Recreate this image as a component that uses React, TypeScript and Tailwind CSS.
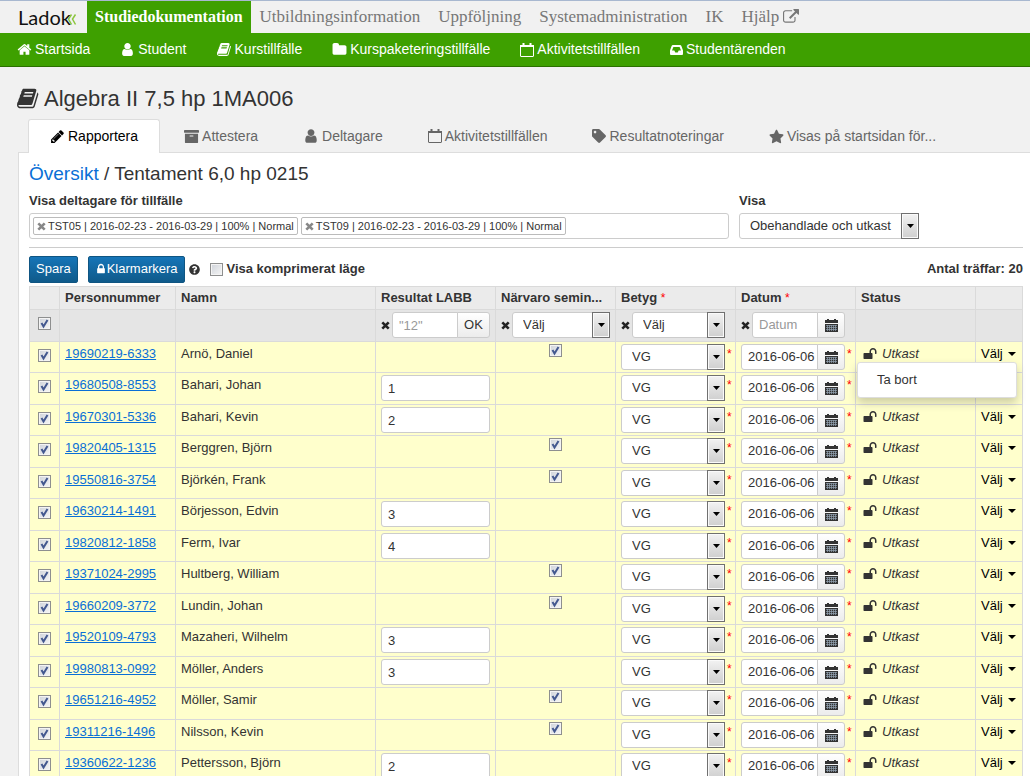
import type { ReactNode } from "react";
import { FaArchive, FaQuestionCircle, FaStar, FaTag } from "react-icons/fa";

const paths = {
  home: "M1472 992v480q0 26-19 45t-45 19h-384v-384h-256v384h-384q-26 0-45-19t-19-45v-480q0-1 .5-3t.5-3l575-474 575 474q1 2 1 6zm223-69l-62 74q-8 9-21 11h-3q-13 0-21-7l-692-577-692 577q-12 8-24 7-13-2-21-11l-62-74q-8-10-7-23.5t11-21.5l719-599q32-26 76-26t76 26l244 204v-195q0-14 9-23t23-9h192q14 0 23 9t9 23v408l219 182q10 8 11 21.5t-7 23.5z",
  user: "M1536 1399q0 109-62.5 187t-150.5 78h-854q-88 0-150.5-78t-62.5-187q0-85 8.5-160.5t31.5-152 58.5-131 94-89 134.5-34.5q131 128 313 128t313-128q76 0 134.5 34.5t94 89 58.5 131 31.5 152 8.5 160.5zm-256-887q0 159-112.5 271.5t-271.5 112.5-271.5-112.5-112.5-271.5 112.5-271.5 271.5-112.5 271.5 112.5 112.5 271.5z",
  book: "M1639 478q40 57 18 129l-275 906q-19 64-76.5 107.5t-122.5 43.5h-923q-77 0-148.5-53.5t-99.5-131.5q-24-67-2-127 0-4 3-27t4-37q1-8-3-21.5t-3-19.5q2-11 8-21t16.5-23.5 16.5-23.5q23-38 45-91.5t30-91.5q3-10 .5-30t-.5-28q3-11 17-28t17-23q21-36 42-92t25-90q1-9-2.5-32t.5-28q4-13 22-30.5t22-22.5q19-26 42.5-84.5t27.5-96.5q1-8-3-25.5t-2-26.5q2-8 9-18t18-23 17-21q8-12 16.5-30.5t15-35 16-36 19.5-32 26.5-23.5 36-11.5 47.5 5.5l-1 3q38-9 51-9h761q74 0 114 56t18 130l-274 906q-36 119-71.5 153.5t-128.5 34.5h-869q-27 0-38 15-11 16-1 43 24 70 144 70h923q29 0 56-15.5t35-41.5l300-987q7-22 5-57 38 15 59 43zm-1064 2q-4 13 2 22.5t20 9.5h608q13 0 25.5-9.5t16.5-22.5l21-64q4-13-2-22.5t-20-9.5h-608q-13 0-25.5 9.5t-16.5 22.5zm-83 256q-4 13 2 22.5t20 9.5h608q13 0 25.5-9.5t16.5-22.5l21-64q4-13-2-22.5t-20-9.5h-608q-13 0-25.5 9.5t-16.5 22.5z",
  folder: "M1728 608v704q0 92-66 158t-158 66h-1216q-92 0-158-66t-66-158v-960q0-92 66-158t158-66h320q92 0 158 66t66 158v32h672q92 0 158 66t66 158z",
  pencil: "M491 1536l91-91-235-235-91 91v107h128v128h107zm523-928q0-22-22-22-10 0-17 7l-542 542q-7 7-7 17 0 22 22 22 10 0 17-7l542-542q7-7 7-17zm-54-192l416 416-832 832h-416v-416zm683 96q0 53-37 90l-166 166-416-416 166-165q36-38 90-38 53 0 91 38l235 234q37 39 37 91z",
  external: "M1408 928v320q0 119-84.5 203.5t-203.5 84.5h-832q-119 0-203.5-84.5t-84.5-203.5v-832q0-119 84.5-203.5t203.5-84.5h704q14 0 23 9t9 23v64q0 14-9 23t-23 9h-704q-66 0-113 47t-47 113v832q0 66 47 113t113 47h832q66 0 113-47t47-113v-320q0-14 9-23t23-9h64q14 0 23 9t9 23zm384-864v512q0 26-19 45t-45 19-45-19l-176-176-652 652q-10 10-23 10t-23-10l-114-114q-10-10-10-23t10-23l652-652-176-176q-19-19-19-45t19-45 45-19h512q26 0 45 19t19 45z",
  lock: "M640 768h512v-192q0-106-75-181t-181-75-181 75-75 181v192zm832 96v576q0 40-28 68t-68 28h-960q-40 0-68-28t-28-68v-576q0-40 28-68t68-28h32v-192q0-184 132-316t316-132 316 132 132 316v192h32q40 0 68 28t28 68z",
  unlock: "M1728 576v256q0 26-19 45t-45 19h-64q-26 0-45-19t-19-45v-256q0-106-75-181t-181-75-181 75-75 181v192h96q40 0 68 28t28 68v576q0 40-28 68t-68 28h-960q-40 0-68-28t-28-68v-576q0-40 28-68t68-28h672v-192q0-185 131.5-316.5t316.5-131.5 316.5 131.5 131.5 316.5z",
};

function Icon({ name, className = "size-4" }: { name: keyof typeof paths; className?: string }) {
  return (
    <svg viewBox="0 0 1792 1792" fill="currentColor" className={`shrink-0 ${className}`} aria-hidden="true">
      <path d={paths[name]} />
    </svg>
  );
}

function CalendarOutline() {
  return (
    <svg viewBox="0 0 14 14" fill="none" stroke="currentColor" className="size-3.5 shrink-0" aria-hidden="true">
      <rect x="0.5" y="2.5" width="13" height="11" rx="0.5" />
      <path d="M0 2h14v2H0z" fill="currentColor" stroke="none" />
      <path d="M3.500 0v4M10.500 0v4" strokeWidth="2" />
    </svg>
  );
}

function CalendarGrid() {
  return (
    <svg viewBox="0 0 13 13" className="size-[13px]" fill="#333" aria-hidden="true">
      <path d="M2 0h2v1h5V0h2v1h2v3H0V1h2z" />
      <path d="M0 5h13v8H0z" />
      <path d="M1 6.500h11M1 8.500h11M1 10.500h11M2.500 6v6M4.500 6v6M6.500 6v6M8.500 6v6M10.500 6v6" stroke="#93a3b3" strokeWidth="0.7" />
    </svg>
  );
}

function Inbox() {
  return (
    <svg viewBox="0 0 13 12" className="h-3 w-[13px] shrink-0" fill="currentColor" fillRule="evenodd" aria-hidden="true">
      <path d="M3 1h7q1 0 1.400 1L13 6.500V10q0 1-1 1H1q-1 0-1-1V6.500L1.600 2Q2 1 3 1zM3.400 3L2 6.500h2.300L5.300 8.500h2.400l1-2H11L9.600 3z" />
    </svg>
  );
}

function Cross({ className = "" }: { className?: string }) {
  return (
    <svg viewBox="0 0 9 9" className={`size-[9px] shrink-0 ${className}`} aria-hidden="true">
      <path d="M1.300 1.300l6.400 6.400M7.700 1.300L1.300 7.700" stroke="currentColor" strokeWidth="2.600" />
    </svg>
  );
}

function Checkbox({ id, label, checked = true }: { id?: string; label?: string; checked?: boolean }) {
  return (
    <span className="inline-grid size-[13px] align-top">
      <input
        id={id}
        type="checkbox"
        aria-label={label}
        defaultChecked={checked}
        className="peer col-start-1 row-start-1 size-[13px] appearance-none border border-[#8e8f8f] bg-linear-to-br from-[#cfd3da] to-[#f6f6f6] shadow-[inset_0_0_0_1px_#f4f4f4]"
      />
      <svg
        viewBox="0 0 13 13"
        className="pointer-events-none invisible col-start-1 row-start-1 size-[13px] peer-checked:visible"
        fill="none"
        stroke="#43588f"
        strokeWidth="2"
        aria-hidden="true"
      >
        <path d="M3.500 6l2 3.500L9.500 3" />
      </svg>
    </span>
  );
}

function Select({ id, label, value, className = "" }: { id?: string; label?: string; value: string; className?: string }) {
  return (
    <span className={`relative flex h-[26px] ${className}`}>
      <select
        id={id}
        aria-label={label}
        className="w-full appearance-none rounded-[3px] border border-[#ccc] bg-white pl-2.5 text-[13px] text-[#333]"
      >
        <option>{value}</option>
      </select>
      <span className="pointer-events-none absolute inset-y-0 right-0 grid w-[18px] place-items-center border border-[#707070] bg-linear-to-b from-[#f2f2f2] to-[#cfcfcf] shadow-[inset_0_0_0_1px_#fafafa]">
        <svg viewBox="0 0 7 4" className="h-1 w-[7px]" aria-hidden="true">
          <path d="M0 0h7L3.500 4z" />
        </svg>
      </span>
    </span>
  );
}

function DateField({ label, value, className }: { label: string; value?: string; className: string }) {
  return (
    <span className={`flex h-[26px] ${className}`}>
      <input
        aria-label={label}
        defaultValue={value}
        placeholder="Datum"
        className="w-full min-w-0 rounded-l-[3px] border border-[#ccc] bg-white pl-1.5 text-[13px] placeholder:text-[#999]"
      />
      <button
        type="button"
        aria-label="Välj datum"
        className="-ml-px grid w-7 shrink-0 place-items-center rounded-r-[3px] border border-[#ccc] bg-linear-to-b from-white to-[#ececec]"
      >
        <CalendarGrid />
      </button>
    </span>
  );
}

function Required() {
  return <span className="text-[12px] font-normal text-[#f00]">*</span>;
}

function Clear({ label }: { label: string }) {
  return (
    <button type="button" aria-label={label} className="mr-[2px] text-[#222]">
      <Cross />
    </button>
  );
}

const menu = ["Utbildningsinformation", "Uppföljning", "Systemadministration", "IK"];

const subMenu: [string, ReactNode][] = [
  ["Startsida", <Icon name="home" className="size-[15px]" />],
  ["Student", <Icon name="user" className="size-[15px]" />],
  ["Kurstillfälle", <Icon name="book" className="size-[15px]" />],
  ["Kurspaketeringstillfälle", <Icon name="folder" className="size-[15px]" />],
  ["Aktivitetstillfällen", <CalendarOutline />],
  ["Studentärenden", <Inbox />],
];

const tabs: [string, ReactNode][] = [
  ["Attestera", <FaArchive className="size-[15px]" />],
  ["Deltagare", <Icon name="user" />],
  ["Aktivitetstillfällen", <CalendarOutline />],
  ["Resultatnoteringar", <FaTag className="size-3.5" />],
  ["Visas på startsidan för...", <FaStar className="size-[15px]" />],
];

const chips = ["TST05 | 2016-02-23 - 2016-03-29 | 100% | Normal", "TST09 | 2016-02-23 - 2016-03-29 | 100% | Normal"];

// A row has either a lab result or an attended seminar
const rows: { id: string; name: string; result?: string }[] = [
  { id: "19690219-6333", name: "Arnö, Daniel" },
  { id: "19680508-8553", name: "Bahari, Johan", result: "1" },
  { id: "19670301-5336", name: "Bahari, Kevin", result: "2" },
  { id: "19820405-1315", name: "Berggren, Björn" },
  { id: "19550816-3754", name: "Björkén, Frank" },
  { id: "19630214-1491", name: "Börjesson, Edvin", result: "3" },
  { id: "19820812-1858", name: "Ferm, Ivar", result: "4" },
  { id: "19371024-2995", name: "Hultberg, William" },
  { id: "19660209-3772", name: "Lundin, Johan" },
  { id: "19520109-4793", name: "Mazaheri, Wilhelm", result: "3" },
  { id: "19980813-0992", name: "Möller, Anders", result: "3" },
  { id: "19651216-4952", name: "Möller, Samir" },
  { id: "19311216-1496", name: "Nilsson, Kevin" },
  { id: "19360622-1236", name: "Pettersson, Björn", result: "2" },
];

function Header() {
  return (
    <header className="shrink-0">
      <nav className="flex h-[33px] border-t border-[#a8b8d0] font-['Liberation_Serif',serif] text-[17px] text-[#777]">
        <a href="#" aria-label="Ladok" className="flex w-[87px] items-center pl-[18px]">
          <svg viewBox="0 0 60 24" className="h-6 w-[60px]" aria-hidden="true">
            <text x="0" y="20" fontFamily="Lato" fontSize="20" fill="#111">
              Ladok
            </text>
            <path d="M53.500 9.500l-3 4.500 3 5.500M57.500 9.500l-3 4.500 3 5.500" fill="none" stroke="#8cc63f" strokeWidth="1.500" />
          </svg>
        </a>
        <a href="#" className="flex items-center bg-[#3ea000] px-2 text-[16px] font-bold text-white">
          Studiedokumentation
        </a>
        {menu.map((item) => (
          <a key={item} href="#" className="flex items-center px-[9px]">
            {item}
          </a>
        ))}
        <a href="#" className="flex items-center gap-1 px-[9px]">
          Hjälp
          <Icon name="external" className="size-4" />
        </a>
      </nav>
      <nav className="flex h-[34px] items-center gap-[30px] border-b border-[#2b7000] bg-[#3ea000] pl-[17px] text-[14px] text-white">
        {subMenu.map(([text, icon]) => (
          <a key={text} href="#" className="flex items-center gap-[3px]">
            {icon}
            {text}
          </a>
        ))}
      </nav>
    </header>
  );
}

function Filters() {
  return (
    <div className="flex gap-2.5 border-b border-[#ccc] pb-2">
      <div className="min-w-0 grow">
        <label htmlFor="occasions" className="block text-[13px] leading-6 font-bold">
          Visa deltagare för tillfälle
        </label>
        <div className="flex h-[26px] items-center gap-[3px] rounded-[3px] border border-[#ccc] px-[3px]">
          {chips.map((chip) => (
            <span key={chip} className="flex h-[18px] shrink-0 items-center gap-[2px] rounded-[2px] border border-[#bbb] px-[3px] text-[11px]">
              <button type="button" aria-label={`Ta bort ${chip.slice(0, 5)}`}>
                <Cross className="text-[#888]" />
              </button>
              {chip}
            </span>
          ))}
          <input id="occasions" className="w-0 min-w-0 grow outline-none" />
        </div>
      </div>
      <div className="w-[284px] shrink-0">
        <label htmlFor="show" className="block text-[13px] leading-6 font-bold">
          Visa
        </label>
        <Select id="show" value="Obehandlade och utkast" className="w-[180px]" />
      </div>
    </div>
  );
}

function Toolbar() {
  const button =
    "flex h-[27px] items-center rounded-[2px] border border-[#0f5582] bg-linear-to-b from-[#1675b8] to-[#0f5a8a] px-1.5 text-[13px] text-white";
  return (
    <div className="flex h-[38px] items-center pt-1">
      <button type="button" className={button}>
        Spara
      </button>
      <button type="button" className={`ml-2.5 ${button}`}>
        <Icon name="lock" className="size-3" />
        Klarmarkera
      </button>
      <FaQuestionCircle className="mx-1 size-[11px]" />
      <label htmlFor="compact" className="ml-1.5 flex items-center gap-1 text-[13px] font-bold">
        <Checkbox id="compact" checked={false} />
        Visa komprimerat läge
      </label>
      <p className="ml-auto text-[13px] font-bold">Antal träffar: 20</p>
    </div>
  );
}

function ResultTable() {
  return (
    <table className="w-full table-fixed border-collapse text-[13px] leading-5 [&_td]:border [&_td]:border-[#dadada] [&_td]:px-[5px] [&_td]:py-[2px] [&_td]:align-top [&_th]:border [&_th]:border-[#dadada] [&_th]:px-[5px] [&_th]:text-left">
      <colgroup>
        <col className="w-[30px]" />
        <col className="w-[116px]" />
        <col />
        <col className="w-[120px]" />
        <col className="w-[120px]" />
        <col className="w-[120px]" />
        <col className="w-[120px]" />
        <col className="w-[120px]" />
        <col className="w-[47px]" />
      </colgroup>
      <thead>
        <tr className="h-[23px] bg-[#ebebeb]">
          <th />
          <th>Personnummer</th>
          <th>Namn</th>
          <th>Resultat LABB</th>
          <th>Närvaro semin...</th>
          <th>
            Betyg <Required />
          </th>
          <th>
            Datum <Required />
          </th>
          <th>Status</th>
          <th />
        </tr>
        <tr className="h-8 bg-[#e5e5e5]">
          <td className="text-center">
            <div className="pt-[5px]">
              <Checkbox label="Markera alla" />
            </div>
          </td>
          <td />
          <td />
          <td>
            <div className="flex h-[26px] items-center">
              <Clear label="Rensa resultat" />
              <input
                aria-label="Resultat"
                placeholder={'"12"'}
                className="h-[26px] w-full min-w-0 rounded-l-[3px] border border-[#ccc] bg-white pl-1.5 placeholder:text-[#999]"
              />
              <button
                type="button"
                className="-ml-px h-[26px] w-[33px] shrink-0 rounded-r-[3px] border border-[#ccc] bg-linear-to-b from-white to-[#ececec]"
              >
                OK
              </button>
            </div>
          </td>
          <td>
            <div className="flex items-center">
              <Clear label="Rensa närvaro" />
              <Select label="Närvaro" value="Välj" className="grow" />
            </div>
          </td>
          <td>
            <div className="flex items-center pr-[5px]">
              <Clear label="Rensa betyg" />
              <Select label="Betyg" value="Välj" className="grow" />
            </div>
          </td>
          <td>
            <div className="flex items-center pr-[5px]">
              <Clear label="Rensa datum" />
              <DateField label="Datum" className="grow" />
            </div>
          </td>
          <td />
          <td />
        </tr>
      </thead>
      <tbody className="bg-[#ffffcc]">
        {rows.map((row, i) => (
          <tr key={row.id} className="h-[31px] even:h-8">
            <td className="text-center">
              <div className="pt-[5px]">
                <Checkbox label={`Markera ${row.name}`} />
              </div>
            </td>
            <td>
              <a href="#" className="text-[#0a6fd6] underline">
                {row.id}
              </a>
            </td>
            <td>{row.name}</td>
            <td>
              {row.result && (
                <input
                  aria-label={`Resultat för ${row.name}`}
                  defaultValue={row.result}
                  className="block h-[26px] w-full rounded-[3px] border border-[#ccc] bg-white px-1.5"
                />
              )}
            </td>
            <td className="text-center">{!row.result && <Checkbox label={`Närvaro för ${row.name}`} />}</td>
            <td>
              <div className="flex gap-[2px]">
                <Select label={`Betyg för ${row.name}`} value="VG" className="w-[104px] shrink-0" />
                <Required />
              </div>
            </td>
            <td>
              <div className="flex gap-[2px]">
                <DateField label={`Datum för ${row.name}`} value="2016-06-06" className="w-[104px] shrink-0" />
                <Required />
              </div>
            </td>
            <td>
              <div className="flex items-center gap-[5px] pl-[2px] italic">
                <Icon name="unlock" className="size-3.5" />
                Utkast
              </div>
            </td>
            <td>
              <div className="relative">
                <button type="button" className="flex items-center gap-[5px] text-black">
                  Välj
                  <svg viewBox="0 0 8 4" className="h-1 w-2" aria-hidden="true">
                    <path d="M0 0h8L4 4z" />
                  </svg>
                </button>
                {i === 0 && (
                  <ul className="absolute top-[18px] right-0 z-10 w-40 rounded-[3px] border border-[#ddd] bg-white py-[7px] shadow-[0_5px_10px_rgba(0,0,0,0.2)]">
                    <li>
                      <button type="button" className="px-[19px]">
                        Ta bort
                      </button>
                    </li>
                  </ul>
                )}
              </div>
            </td>
          </tr>
        ))}
      </tbody>
    </table>
  );
}

export default function App() {
  return (
    <div className="flex h-screen flex-col overflow-hidden bg-[#f1f1f1] font-['Liberation_Sans',sans-serif] text-[#333]">
      <Header />
      <h1 className="flex h-[52px] shrink-0 items-center gap-1 pt-2.5 pl-[17px] text-[22px]">
        <Icon name="book" className="size-[23px]" />
        Algebra II 7,5 hp 1MA006
      </h1>
      <nav className="z-10 -mb-px ml-7 flex h-[34px] shrink-0 gap-[3px] text-[14px] text-[#666]">
        <a href="#" className="flex items-center gap-[3px] rounded-t-[3px] border border-b-0 border-[#ddd] bg-white px-[21px] text-black">
          <Icon name="pencil" className="size-[15px]" />
          Rapportera
        </a>
        {tabs.map(([text, icon]) => (
          <a key={text} href="#" className="flex items-center gap-[3px] px-[21px]">
            {icon}
            {text}
          </a>
        ))}
      </nav>
      <main className="ml-[18px] grow border-t border-l border-[#ddd] bg-white pt-1.5 pr-[7px] pl-2.5">
        <h2 className="text-[19px] leading-[30px]">
          <a href="#" className="text-[#0a6fd6]">
            Översikt
          </a>{" "}
          / Tentament 6,0 hp 0215
        </h2>
        <Filters />
        <Toolbar />
        <ResultTable />
      </main>
    </div>
  );
}
